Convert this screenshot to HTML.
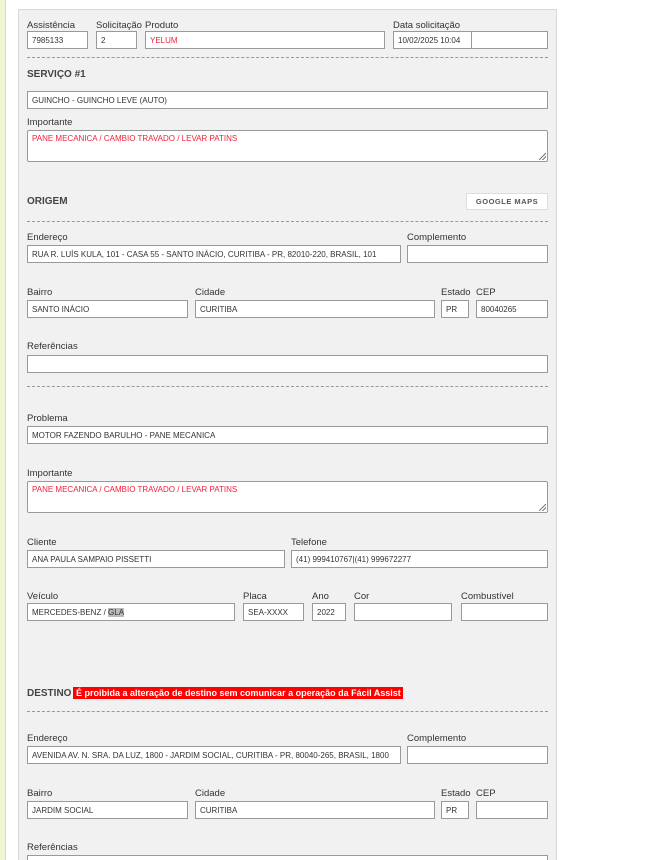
<!DOCTYPE html>
<html><head><meta charset="utf-8"><style>
*{box-sizing:border-box;margin:0;padding:0}
html,body{width:651px;height:860px;overflow:hidden}
body{background:#fff;font-family:"Liberation Sans","DejaVu Sans",sans-serif;position:relative}
.strip{position:absolute;left:0;top:0;width:6px;height:860px;background:#eef6cf;border-right:1px solid #d8dcc0}
.panel{position:absolute;left:18px;top:9px;width:539px;height:851px;background:#f1f1f1;border:1px solid #d8d8d8;border-bottom:none}
.l{position:absolute;font-size:9.5px;color:#333;line-height:11px;white-space:nowrap;margin-top:1px}
.i{position:absolute;height:18px;background:#fff;border:1px solid #999;font-size:8px;color:#333;padding:0 0 0 4px;line-height:17px;white-space:nowrap;overflow:hidden}
.t{height:32px;border-radius:2px;line-height:13px;padding-top:1px}
.red{color:#f0203a}
.h{position:absolute;font-size:10px;font-weight:bold;color:#444}
.d{position:absolute;left:27px;width:521px;border-top:1px dashed #999}
.btn{position:absolute;left:466px;top:193px;width:82px;height:17px;background:#fff;border:1px solid #ddd;font-size:7.5px;font-weight:bold;color:#555;text-align:center;line-height:15px;letter-spacing:.5px}
.ban{position:absolute;left:73px;top:687px;width:330px;height:12px;background:#f00;color:#fff;font-size:9px;font-weight:bold;line-height:12px;padding-left:3px;white-space:nowrap}
.rs{position:absolute;right:1px;bottom:1px;width:7px;height:7px;background:linear-gradient(135deg,transparent 45%,#777 45%,#777 55%,transparent 55%,transparent 70%,#777 70%,#777 80%,transparent 80%)}
</style></head><body>
<div class="strip"></div>
<div class="panel"></div>

<div class="l" style="left:27px;top:19px">Assistência</div>
<div class="l" style="left:96px;top:19px">Solicitação</div>
<div class="l" style="left:145px;top:19px">Produto</div>
<div class="l" style="left:393px;top:19px">Data solicitação</div>
<div class="i" style="left:27px;top:31px;width:61px">7985133</div>
<div class="i" style="left:96px;top:31px;width:41px">2</div>
<div class="i red" style="left:145px;top:31px;width:240px">YELUM</div>
<div class="i" style="left:393px;top:31px;width:79px">10/02/2025 10:04</div>
<div class="i" style="left:471px;top:31px;width:77px"></div>
<div class="d" style="top:57px"></div>

<div class="h" style="left:27px;top:69px">SERVIÇO #1</div>
<div class="i" style="left:27px;top:91px;width:521px">GUINCHO - GUINCHO LEVE (AUTO)</div>
<div class="l" style="left:27px;top:116px">Importante</div>
<div class="i t red" style="left:27px;top:130px;width:521px">PANE MECANICA / CAMBIO TRAVADO / LEVAR PATINS<div class="rs"></div></div>

<div class="h" style="left:27px;top:196px">ORIGEM</div>
<div class="btn">GOOGLE MAPS</div>
<div class="d" style="top:221px"></div>
<div class="l" style="left:27px;top:231px">Endereço</div>
<div class="l" style="left:407px;top:231px">Complemento</div>
<div class="i" style="left:27px;top:245px;width:374px">RUA R. LUÍS KULA, 101 - CASA 55 - SANTO INÁCIO, CURITIBA - PR, 82010-220, BRASIL, 101</div>
<div class="i" style="left:407px;top:245px;width:141px"></div>
<div class="l" style="left:27px;top:286px">Bairro</div>
<div class="l" style="left:195px;top:286px">Cidade</div>
<div class="l" style="left:441px;top:286px">Estado</div>
<div class="l" style="left:476px;top:286px">CEP</div>
<div class="i" style="left:27px;top:300px;width:161px">SANTO INÁCIO</div>
<div class="i" style="left:195px;top:300px;width:240px">CURITIBA</div>
<div class="i" style="left:441px;top:300px;width:28px">PR</div>
<div class="i" style="left:476px;top:300px;width:72px">80040265</div>
<div class="l" style="left:27px;top:340px">Referências</div>
<div class="i" style="left:27px;top:355px;width:521px"></div>
<div class="d" style="top:386px"></div>

<div class="l" style="left:27px;top:412px">Problema</div>
<div class="i" style="left:27px;top:426px;width:521px">MOTOR FAZENDO BARULHO - PANE MECANICA</div>
<div class="l" style="left:27px;top:467px">Importante</div>
<div class="i t red" style="left:27px;top:481px;width:521px">PANE MECANICA / CAMBIO TRAVADO / LEVAR PATINS<div class="rs"></div></div>

<div class="l" style="left:27px;top:536px">Cliente</div>
<div class="l" style="left:291px;top:536px">Telefone</div>
<div class="i" style="left:27px;top:550px;width:258px">ANA PAULA SAMPAIO PISSETTI</div>
<div class="i" style="left:291px;top:550px;width:257px">(41) 999410767|(41) 999672277</div>

<div class="l" style="left:27px;top:590px">Veículo</div>
<div class="l" style="left:243px;top:590px">Placa</div>
<div class="l" style="left:312px;top:590px">Ano</div>
<div class="l" style="left:354px;top:590px">Cor</div>
<div class="l" style="left:461px;top:590px">Combustível</div>
<div class="i" style="left:27px;top:603px;width:208px">MERCEDES-BENZ / <span style="background:#bbb">GLA</span></div>
<div class="i" style="left:243px;top:603px;width:61px">SEA-XXXX</div>
<div class="i" style="left:312px;top:603px;width:34px">2022</div>
<div class="i" style="left:354px;top:603px;width:98px"></div>
<div class="i" style="left:461px;top:603px;width:87px"></div>

<div class="h" style="left:27px;top:688px">DESTINO</div>
<div class="ban">É proibida a alteração de destino sem comunicar a operação da Fácil Assist</div>
<div class="d" style="top:711px"></div>
<div class="l" style="left:27px;top:732px">Endereço</div>
<div class="l" style="left:407px;top:732px">Complemento</div>
<div class="i" style="left:27px;top:746px;width:374px">AVENIDA AV. N. SRA. DA LUZ, 1800 - JARDIM SOCIAL, CURITIBA - PR, 80040-265, BRASIL, 1800</div>
<div class="i" style="left:407px;top:746px;width:141px"></div>
<div class="l" style="left:27px;top:787px">Bairro</div>
<div class="l" style="left:195px;top:787px">Cidade</div>
<div class="l" style="left:441px;top:787px">Estado</div>
<div class="l" style="left:476px;top:787px">CEP</div>
<div class="i" style="left:27px;top:801px;width:161px">JARDIM SOCIAL</div>
<div class="i" style="left:195px;top:801px;width:240px">CURITIBA</div>
<div class="i" style="left:441px;top:801px;width:28px">PR</div>
<div class="i" style="left:476px;top:801px;width:72px"></div>
<div class="l" style="left:27px;top:841px">Referências</div>
<div class="i" style="left:27px;top:855px;width:521px"></div>
</body></html>
